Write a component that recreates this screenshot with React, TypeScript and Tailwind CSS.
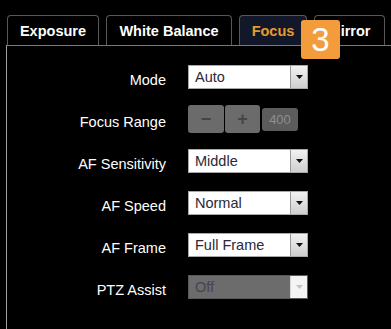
import { ReactNode } from 'react';

const tabs = [
  { label: 'Exposure', width: 'w-[92px]', active: false },
  { label: 'White Balance', width: 'w-[126px]', active: false },
  { label: 'Focus', width: 'w-[68px]', active: true },
  { label: 'Mirror', width: 'w-[71px]', active: false },
];

const Arrow = ({ disabled }: { disabled?: boolean }) => (
  <div
    className={`flex h-full w-[17px] items-center justify-center border-l ${
      disabled
        ? 'border-[#d8d8d8] bg-[#f4f4f4]'
        : 'border-[#9a9a9a] bg-gradient-to-b from-[#f2f2f2] to-[#cfcfcf]'
    }`}
  >
    <svg width="7" height="4" viewBox="0 0 7 4">
      <path d="M0 0h7L3.5 4z" fill={disabled ? '#c4c4c4' : '#111'} />
    </svg>
  </div>
);

const Select = ({ value, disabled }: { value: string; disabled?: boolean }) => (
  <div
    className={`flex h-[24px] w-[120px] items-center border ${
      disabled ? 'border-[#5a5a5a] bg-[#6c6c6c]' : 'border-[#a8a8a8] bg-white'
    }`}
  >
    <span
      className={`flex-1 pl-[6px] text-[14.5px] leading-none ${
        disabled ? 'text-[#454552]' : 'text-[#2a2a38]'
      }`}
    >
      {value}
    </span>
    <Arrow disabled={disabled} />
  </div>
);

const Row = ({ label, children }: { label: string; children: ReactNode }) => (
  <div className="flex h-[42px] items-center">
    <div className="w-[159px] pt-[6px] text-right text-[14.5px] leading-none text-white">
      {label}
    </div>
    <div className="ml-[22px]">{children}</div>
  </div>
);

const FocusRange = () => (
  <div className="flex items-center gap-[1px]">
    <div className="flex h-[28px] w-[36px] items-center justify-center rounded-[3px] bg-[#6b6b6b] text-[18px] font-bold leading-none text-[#454545]">
      −
    </div>
    <div className="flex h-[28px] w-[35px] items-center justify-center rounded-[3px] bg-[#6b6b6b] text-[18px] font-bold leading-none text-[#454545]">
      +
    </div>
    <div className="ml-[1px] flex h-[23px] w-[36px] items-center justify-center rounded-[3px] bg-[#5c5c5c] text-[13px] leading-none text-[#8c8c96]">
      400
    </div>
  </div>
);

export default function App() {
  return (
    <div
      className="relative h-[329px] w-[391px] overflow-hidden bg-black pt-[15px] pl-[6px]"
      style={{ fontFamily: '"Liberation Sans", Arial, sans-serif' }}
    >
      <div className="flex gap-[7px] pl-[1px]">
        {tabs.map((t) => (
          <div
            key={t.label}
            className={`${t.width} flex h-[30px] items-center justify-center rounded-t-[4px] border border-b-0 border-[#585858] pt-[3px] text-[14.5px] font-bold ${
              t.active ? 'bg-[#121829] text-[#e89a2c]' : 'bg-black text-white'
            }`}
          >
            {t.label}
          </div>
        ))}
      </div>
      <div className="h-full border-l border-t border-l-[#a0a0a0] border-t-[#7a7a7a] pt-[10px]">
        <Row label="Mode">
          <Select value="Auto" />
        </Row>
        <Row label="Focus Range">
          <FocusRange />
        </Row>
        <Row label="AF Sensitivity">
          <Select value="Middle" />
        </Row>
        <Row label="AF Speed">
          <Select value="Normal" />
        </Row>
        <Row label="AF Frame">
          <Select value="Full Frame" />
        </Row>
        <Row label="PTZ Assist">
          <Select value="Off" disabled />
        </Row>
      </div>
      <div className="absolute left-[301px] top-[20px] flex h-[39px] w-[39px] items-center justify-center rounded-[3px] bg-[#f39c3c] text-[33px] leading-none text-white">
        3
      </div>
    </div>
  );
}
